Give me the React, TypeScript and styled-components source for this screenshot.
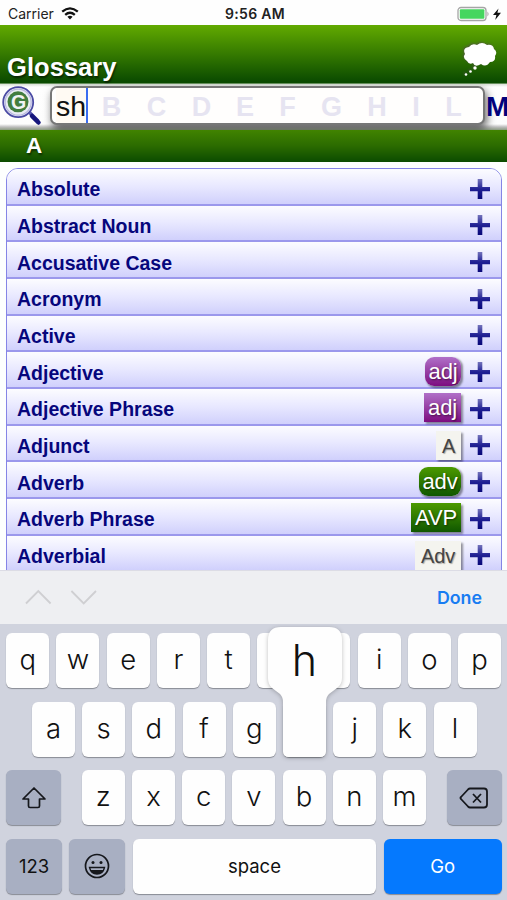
import React from "react";
import styled, { createGlobalStyle, css } from "styled-components";

const Global = createGlobalStyle`
  * { box-sizing: border-box; }
  body { margin: 0; background: #fff; overflow: hidden; }
`;

const arial = `"Liberation Sans", Arial, sans-serif`;
const inter = `Inter, "Liberation Sans", sans-serif`;

const Screen = styled.div`
  width: 507px;
  height: 900px;
  display: flex;
  flex-direction: column;
  overflow: hidden;
  background: #fdfffe;
  font-family: ${arial};
`;

const StatusBar = styled.div`
  flex: none;
  height: 25px;
  display: grid;
  grid-template-columns: 1fr auto 1fr;
  align-items: center;
  padding: 2px 5px 0 8px;
  background: #fefefe;
  color: #222;
  font: 400 14px/20px ${inter};
`;

const Carrier = styled.div`
  display: flex;
  align-items: center;
  gap: 7px;
`;

const Clock = styled.div`
  font-weight: 600;
  font-size: 14px;
  letter-spacing: 0.3px;
`;

const Power = styled.div`
  display: flex;
  justify-content: flex-end;
`;

const Header = styled.header`
  flex: none;
  height: 59px;
  display: flex;
  align-items: flex-end;
  justify-content: space-between;
  padding: 0 8px 2px 7px;
  background: linear-gradient(#62aa00, #357a00 50%, #0b4b00 97%);
  border-bottom: 1px solid #668f5c;
`;

const Title = styled.h1`
  margin: 0;
  color: #fff;
  font: bold 25.5px/28px ${arial};
  letter-spacing: 0.05px;
  text-shadow: 1px 2px 2px rgba(0, 0, 0, 0.55);
`;

const Thought = styled.svg`
  width: 38px;
  height: 38px;
  margin-bottom: 3px;
  filter: drop-shadow(-0.5px -0.5px 1px rgba(90, 70, 90, 0.6));
`;

const SearchRow = styled.div`
  flex: none;
  height: 46px;
  display: flex;
  align-items: flex-start;
  overflow: hidden;
  padding-top: 2px;
  background: linear-gradient(#d8dfd6 0, #fefefe 3px, #fdfdfd 40px, #bcbcbc 43px, #8b9b80 46px);
`;

const SearchIcon = styled.svg`
  flex: none;
  width: 50px;
  height: 42px;
`;

const Field = styled.div`
  flex: none;
  width: 435px;
  height: 39px;
  display: flex;
  align-items: center;
  border: 2px solid #777;
  border-radius: 7px;
  background: #fffefd;
  box-shadow: 2px 4px 8px rgba(0, 0, 0, 0.6);
  padding-left: 4px;
`;

const Typed = styled.span`
  display: flex;
  align-items: center;
  width: 32px;
  height: 35px;
  padding-top: 2px;
  border-right: 2px solid #3a6cf0;
  color: #111;
  background: #fffaf3;
  font: 28.5px/35px ${arial};
`;

const Letters = styled.div`
  display: grid;
  grid-template-columns: 45px 45px 45px 42px 43px 45px 46px 32px 43px;
  justify-items: center;
  margin: 2px 0 0 1px;
  color: #e6e4f1;
  font: bold 27px/36px ${arial};
`;

const NextLetter = styled.span`
  flex: none;
  margin: 4px 0 0 1px;
  color: #02027c;
  font: bold 28px/34px ${arial};
`;

const Section = styled.div`
  flex: none;
  height: 32px;
  padding-left: 26px;
  background: linear-gradient(#418300, #2b6b00 50%, #0b4b00);
  color: #fff;
  font: bold 22.5px/32px ${arial};
  text-shadow: 1px 2px 2px rgba(0, 0, 0, 0.5);
`;

const List = styled.div`
  flex: none;
  height: 408px;
  padding: 6px 5px 0 6px;
  overflow: hidden;
`;

const Entries = styled.div`
  border: 1.5px solid #8585e6;
  border-radius: 12px 12px 0 0;
  overflow: hidden;
  display: grid;
  grid-auto-rows: 36.66px;
`;

const Entry = styled.div`
  display: flex;
  align-items: center;
  padding: 5px 10px 0 10px;
  border-bottom: 2px solid #9b98ec;
  background: linear-gradient(#fcfcff, #e8e8ff 50%, #d0d0fc);
`;

const Name = styled.span`
  flex: 1;
  margin-top: 1px;
  color: #06067c;
  font: bold 19.5px/28px ${arial};
`;

type Kind = "round" | "square" | "plain";

const Tag = styled.span<{ $kind: Kind; $tone?: "purple" | "green"; $w: number }>`
  width: ${(p) => p.$w}px;
  height: 29px;
  margin: -2px 8px 0 0;
  text-align: center;
  color: #fff;
  font: 22px/29px ${arial};
  letter-spacing: -0.2px;
  box-shadow: 1.5px 1.5px 2px rgba(0, 0, 0, 0.4);
  text-shadow: 1px 1px 2px rgba(0, 0, 0, 0.5);
  background: ${(p) =>
    p.$tone === "green"
      ? "linear-gradient(#4c9a00, #0f5700)"
      : "linear-gradient(#b070c8, #7d0d80)"};
  border-radius: ${(p) => (p.$kind === "round" ? 9 : 0)}px;
  ${(p) =>
    p.$kind === "plain" &&
    css`
      margin-top: 0;
      background: #f4f4ef;
      color: #444;
      font-size: 20px;
      line-height: 30px;
      text-shadow: 1px 1px 1px rgba(0, 0, 0, 0.3);
    `}
`;

const PlusIcon = styled.svg`
  width: 22px;
  height: 22px;
`;

const Accessory = styled.div`
  flex: none;
  height: 54px;
  display: flex;
  align-items: center;
  justify-content: space-between;
  padding: 0 25px;
  background: #eeeff2;
  color: #187cf2;
  font: 600 17.8px/24px ${inter};
  border-top: 1px solid #dcdce5;
`;

const Keyboard = styled.div`
  flex: none;
  height: 276px;
  display: grid;
  grid-template-columns: 507px;
  grid-template-rows: repeat(4, 55px);
  row-gap: 13.5px;
  padding-top: 9px;
  background: #d0d3de;
`;

const KeyRow = styled.div<{ $inset: number }>`
  display: flex;
  justify-content: space-between;
  padding: 0 5.3px 0 ${(p) => p.$inset}px;
`;

const KeyGroup = styled.div`
  display: flex;
  gap: 7.2px;
`;

const Key = styled.div<{ $w?: number; $tone?: "grey" | "blue"; $label?: boolean }>`
  position: relative;
  flex: none;
  width: ${(p) => p.$w ?? 43}px;
  height: 55px;
  display: flex;
  align-items: center;
  justify-content: center;
  padding-bottom: ${(p) => (p.$label ? 1 : p.$tone ? 0 : 3)}px;
  border-radius: 6px;
  background: ${(p) => (p.$tone === "grey" ? "#a8afc2" : p.$tone === "blue" ? "#0579fe" : "#fefefe")};
  box-shadow: 0 1px 1px #888b94;
  color: ${(p) => (p.$tone === "blue" ? "#fff" : "#111")};
  font: ${(p) => (p.$label ? "400 18.5px/24px" : "350 27.5px/32px")} ${inter};
`;

const PopShape = styled.svg`
  position: absolute;
  left: -19px;
  top: -79px;
  width: 82px;
  height: 137px;
  overflow: visible;
  filter: drop-shadow(0 1px 2px rgba(0, 0, 0, 0.25));
  z-index: 1;
`;

const PopLetter = styled.span`
  position: absolute;
  left: 0;
  right: 0;
  top: -67px;
  text-align: center;
  z-index: 2;
  font: 350 43px/50px ${inter};
`;

const rows: { name: string; tag?: string; kind?: Kind; tone?: "purple" | "green"; w?: number }[] = [
  { name: "Absolute" },
  { name: "Abstract Noun" },
  { name: "Accusative Case" },
  { name: "Acronym" },
  { name: "Active" },
  { name: "Adjective", tag: "adj", kind: "round", tone: "purple", w: 36 },
  { name: "Adjective Phrase", tag: "adj", kind: "square", tone: "purple", w: 37 },
  { name: "Adjunct", tag: "A", kind: "plain", w: 25 },
  { name: "Adverb", tag: "adv", kind: "round", tone: "green", w: 42 },
  { name: "Adverb Phrase", tag: "AVP", kind: "square", tone: "green", w: 50 },
  { name: "Adverbial", tag: "Adv", kind: "plain", w: 46 },
];

const Plus = () => (
  <PlusIcon viewBox="0 0 22 22">
    <defs>
      <linearGradient id="plus" x1="0" y1="0" x2="0" y2="1">
        <stop offset="0" stopColor="#7474bc" />
        <stop offset="0.5" stopColor="#202094" />
        <stop offset="1" stopColor="#080878" />
      </linearGradient>
    </defs>
    <path d="M8.700 1h4.600v8h7.700v4.200h-7.700v7.800H8.700v-7.800H1V9h7.700z" fill="url(#plus)" />
  </PlusIcon>
);

const keys = (s: string) => s.split("").map((c) => <Key key={c}>{c}</Key>);

export default function App() {
  return (
    <Screen>
      <Global />
      <StatusBar>
        <Carrier>
          Carrier
          <svg width="18" height="13" viewBox="0 0 18 13" fill="none" stroke="#111" strokeWidth="2.3">
            <path d="M1.2 4.6Q9-1.9 16.8 4.6M4.2 7.8Q9 3.6 13.8 7.8" />
            <path d="M9 12.4L6.4 9.7Q9 7.6 11.6 9.7Z" fill="#111" stroke="none" />
          </svg>
        </Carrier>
        <Clock>9:56 AM</Clock>
        <Power>
          <svg width="45" height="16" viewBox="0 0 45 16">
            <rect x="1" y="1.5" width="28" height="13" rx="3" fill="#fff" stroke="#a5a5a5" strokeWidth="1.3" />
            <rect x="2.8" y="3.2" width="24.6" height="9.6" rx="1" fill="#45d65f" />
            <path d="M30.5 5.5q2 2.5 0 5z" fill="#999" />
            <path d="M41.500 2.500L36 9h3.400l-1.200 5L44 6.800h-3.600z" fill="#111" />
          </svg>
        </Power>
      </StatusBar>

      <Header>
        <Title>Glossary</Title>
        <Thought viewBox="0 0 38 38" fill="#fff">
          <path d="M6 21Q1 18 4 14Q1 8 8 7Q11 3 16 5Q21 1 26 5Q32 4 33 9Q37 12 34 16Q35 22 29 22Q25 28 20 24Q14 28 12 23Q8 25 6 21Z" />
          <circle cx="14" cy="28" r="1.7" />
          <circle cx="9.500" cy="31.500" r="1.3" />
          <circle cx="5" cy="34.500" r="1.3" />
        </Thought>
      </Header>

      <SearchRow>
        <SearchIcon viewBox="0 0 50 42">
          <path d="M29 26L38 35" stroke="#5a5ab0" strokeWidth="3.5" />
          <path d="M32 30L38.500 36.500" stroke="#16167c" strokeWidth="4.5" strokeLinecap="round" />
          <circle cx="18.2" cy="16.2" r="15" fill="#e9ecf3" stroke="#4a4aa4" strokeWidth="1.8" />
          <circle cx="18.2" cy="16.2" r="13" fill="none" stroke="#b7b7e0" strokeWidth="1.2" />
          <circle cx="18" cy="15.8" r="10.5" fill="#427d3f" />
          <text x="18.600" y="22.500" textAnchor="middle" fontFamily="Liberation Sans, sans-serif" fontWeight="bold" fontSize="19.500" fill="#f0f3f5">G</text>
        </SearchIcon>
        <Field>
          <Typed>sh</Typed>
          <Letters>
            {"BCDEFGHIL".split("").map((c) => (
              <span key={c}>{c}</span>
            ))}
          </Letters>
        </Field>
        <NextLetter>M</NextLetter>
      </SearchRow>

      <Section>A</Section>

      <List>
        <Entries>
          {rows.map((r) => (
            <Entry key={r.name}>
              <Name>{r.name}</Name>
              {r.tag && (
                <Tag $kind={r.kind!} $tone={r.tone} $w={r.w!}>
                  {r.tag}
                </Tag>
              )}
              <Plus />
            </Entry>
          ))}
        </Entries>
      </List>

      <Accessory>
        <svg width="74" height="18" viewBox="0 0 74 18" fill="none" stroke="#cfcfd2" strokeWidth="1.8">
          <path d="M1 14.500L13.3 2L25.6 14.500M46.4 2L58.7 14.500L71 2" />
        </svg>
        Done
      </Accessory>

      <Keyboard>
        <KeyRow $inset={6.3}>
          <KeyGroup>{keys("qwertyuiop")}</KeyGroup>
        </KeyRow>
        <KeyRow $inset={32}>
          <KeyGroup>
            {keys("asdfg")}
            <Key>
              <PopShape viewBox="0 0 82 137">
                <path
                  d="M17 4H65Q78 4 78 17V55Q78 61 73 65L65 71Q62 74 62 79V128Q62 134 56 134H25Q19 134 19 128V79Q19 74 16 71L8 65Q4 61 4 55V17Q4 4 17 4Z"
                  fill="#fefefe"
                />
              </PopShape>
              <PopLetter>h</PopLetter>
            </Key>
            {keys("jkl")}
          </KeyGroup>
        </KeyRow>
        <KeyRow $inset={6}>
          <Key $w={55} $tone="grey">
            <svg width="26" height="24" viewBox="0 0 26 24" fill="none" stroke="#15171c" strokeWidth="1.7" strokeLinejoin="round">
              <path d="M13 2L24 13H18.5V20Q18.5 21.5 17 21.5H9Q7.500 21.5 7.500 20V13H2Z" />
            </svg>
          </Key>
          <KeyGroup>{keys("zxcvbnm")}</KeyGroup>
          <Key $w={55} $tone="grey">
            <svg width="30" height="24" viewBox="0 0 30 24" fill="none" stroke="#15171c" strokeWidth="1.8" strokeLinejoin="round">
              <path d="M11 2.500H25Q28 2.500 28 5.500V18.500Q28 21.500 25 21.500H11Q10 21.500 9 20.500L2 13Q1 12 2 11L9 3.500Q10 2.500 11 2.500ZM14 8L22 16.500M22 8L14 16.500" />
            </svg>
          </Key>
        </KeyRow>
        <KeyRow $inset={6}>
          <KeyGroup>
            <Key $w={56} $tone="grey" $label>123</Key>
            <Key $w={56} $tone="grey">
              <svg width="26" height="26" viewBox="0 0 26 26" fill="none" stroke="#15171c" strokeWidth="1.7">
                <circle cx="13" cy="13" r="11.500" />
                <circle cx="9" cy="9.500" r="1.500" fill="#15171c" stroke="none" />
                <circle cx="17" cy="9.500" r="1.500" fill="#15171c" stroke="none" />
                <path d="M5.500 14.500H20.500Q19 21 13 21Q7 21 5.500 14.500Z" strokeWidth="1.300" />
                <path d="M6.500 17H19.500Q17.500 21 13 21Q8.500 21 6.500 17Z" fill="#15171c" stroke="none" />
              </svg>
            </Key>
          </KeyGroup>
          <Key $w={243} $label>space</Key>
          <Key $w={118} $tone="blue" $label>Go</Key>
        </KeyRow>
      </Keyboard>
    </Screen>
  );
}
